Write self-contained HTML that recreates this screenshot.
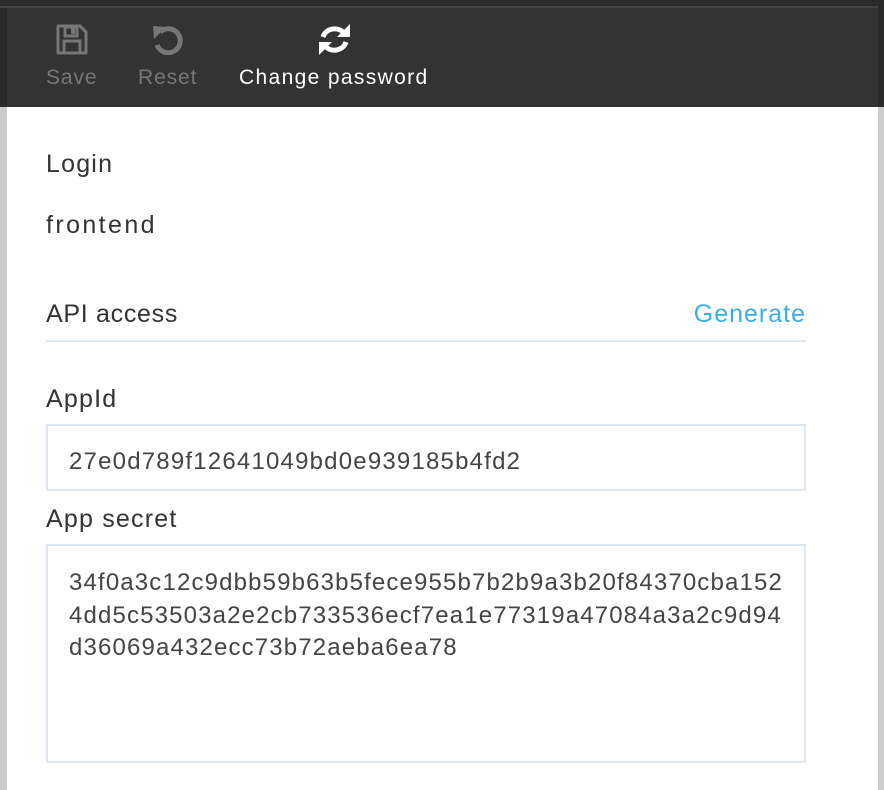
<!DOCTYPE html>
<html><head><style>
html,body{margin:0;padding:0;}
body{width:884px;height:790px;position:relative;overflow:hidden;background:#fff;font-family:"Liberation Sans",sans-serif;color:#333;}
.t{position:absolute;white-space:pre;}
.tb{position:absolute;left:0;top:0;width:884px;height:107px;background:#333;}
.tl{font-size:21px;color:#777;letter-spacing:0.9px;}
.f{font-size:25px;color:#333;letter-spacing:1.2px;}
.v{font-size:24px;color:#444;}
</style></head><body>
<div class="tb"></div>
<div style="position:absolute;left:0;top:0;width:884px;height:6px;background:#2b2b2b"></div>
<div style="position:absolute;left:0;top:6px;width:884px;height:2px;background:#444"></div>
<div style="position:absolute;left:0;top:8px;width:7px;height:99px;background:#2a2a2a"></div>
<div style="position:absolute;left:878px;top:0;width:6px;height:107px;background:#2a2a2a"></div>
<div style="position:absolute;left:0;top:107px;width:7px;height:683px;background:#ccc"></div>
<div style="position:absolute;left:878px;top:107px;width:6px;height:683px;background:#ccc"></div>

<svg style="position:absolute;left:56px;top:24px" width="32" height="31" viewBox="0 0 32 31">
<path d="M2 2H24L30 8V29H2Z" fill="none" stroke="#777" stroke-width="3" stroke-linejoin="round"/>
<rect x="9" y="3" width="12" height="9" fill="none" stroke="#777" stroke-width="3"/>
<rect x="15" y="4" width="4" height="6" fill="#777"/>
<rect x="8" y="17" width="16" height="12" fill="none" stroke="#777" stroke-width="3"/>
</svg>
<svg style="position:absolute;left:151px;top:24px" width="33" height="31" viewBox="0 0 33 31">
<path d="M9 8A12 12 0 1 1 6 21" fill="none" stroke="#777" stroke-width="5"/>
<path d="M2 2L15 3L3 15Z" fill="#777"/>
</svg>
<svg style="position:absolute;left:318px;top:24px" width="33" height="31" viewBox="0 0 33 31">
<path d="M5 13A12 11 0 0 1 26 9" fill="none" stroke="#fff" stroke-width="5"/>
<path d="M32 0V13H19Z" fill="#fff"/>
<path d="M28 18A12 11 0 0 1 7 22" fill="none" stroke="#fff" stroke-width="5"/>
<path d="M1 31V18H14Z" fill="#fff"/>
</svg>
<div class="t tl" style="left:46px;top:66px">Save</div>
<div class="t tl" style="left:138px;top:66px">Reset</div>
<div class="t tl" style="left:239px;top:66px;color:#fff;letter-spacing:1.35px">Change password</div>

<div class="t f" style="left:46px;top:150px">Login</div>
<div class="t f" style="left:46px;top:211px;letter-spacing:2.4px">frontend</div>
<div class="t f" style="left:46px;top:300px;letter-spacing:0.7px">API access</div>
<div class="t f" style="left:660px;top:300px;color:#3aaee6;width:146px;text-align:right;letter-spacing:1px">Generate</div>
<div style="position:absolute;left:46px;top:340px;width:760px;height:2px;background:#dde8f0"></div>
<div class="t f" style="left:46px;top:385px">AppId</div>
<div style="position:absolute;left:46px;top:424px;width:756px;height:63px;border:2px solid #dde8f0"></div>
<div class="t v" style="left:69px;top:448px;letter-spacing:1.2px">27e0d789f12641049bd0e939185b4fd2</div>
<div class="t f" style="left:46px;top:505px">App secret</div>
<div style="position:absolute;left:46px;top:544px;width:756px;height:215px;border:2px solid #dde8f0"></div>
<div class="t v" style="left:69px;top:567px;line-height:32.5px;letter-spacing:1.15px">34f0a3c12c9dbb59b63b5fece955b7b2b9a3b20f84370cba152
4dd5c53503a2e2cb733536ecf7ea1e77319a47084a3a2c9d94
d36069a432ecc73b72aeba6ea78</div>
</body></html>
